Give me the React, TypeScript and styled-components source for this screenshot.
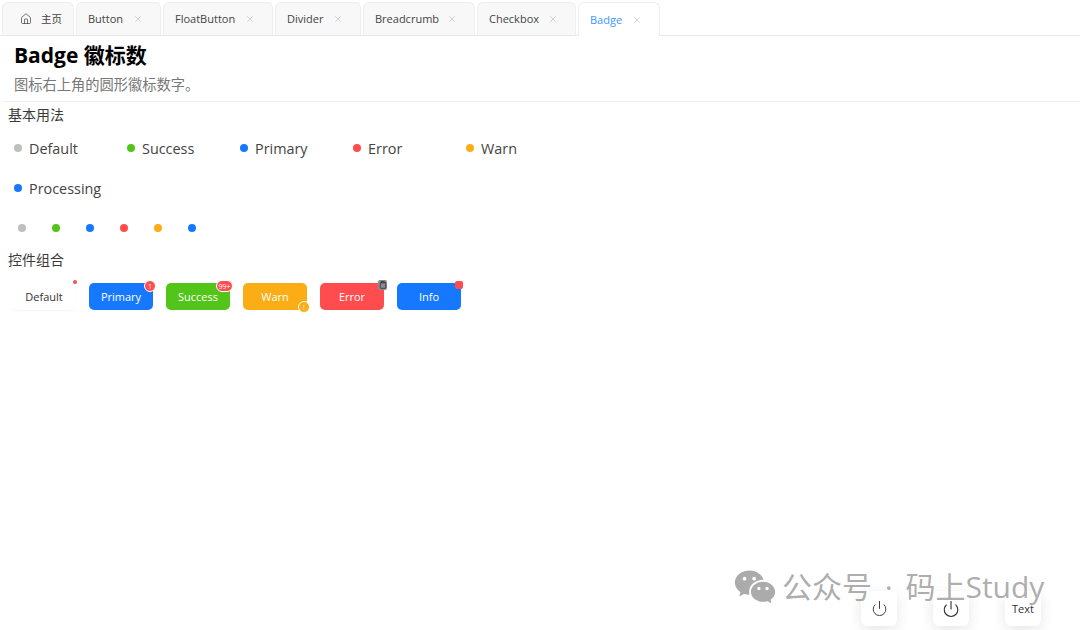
import { FunctionComponent } from "react";
import styled, { createGlobalStyle } from "styled-components";
import { Clipboard, House, Power, X } from "lucide-react";
import { RiWechatFill } from "react-icons/ri";

const FONT = `"Open Sans", "Noto Sans CJK SC", sans-serif`;

const COLORS: Record<string, string> = {
  default: "#bfbfbf",
  success: "#52c41a",
  primary: "#1677ff",
  error: "#ff4d4f",
  warn: "#faad14",
};

const tabs = [
  { label: "Button", width: 85 },
  { label: "FloatButton", width: 110 },
  { label: "Divider", width: 86 },
  { label: "Breadcrumb", width: 112 },
  { label: "Checkbox", width: 99 },
];

const statuses = [
  { label: "Default", color: COLORS.default },
  { label: "Success", color: COLORS.success },
  { label: "Primary", color: COLORS.primary },
  { label: "Error", color: COLORS.error },
  { label: "Warn", color: COLORS.warn },
  { label: "Processing", color: COLORS.primary },
];

const App: FunctionComponent = () => {
  return (
    <Page>
      <GlobalStyle />
      <TabBar>
        <HomeTab>
          <House size={12} strokeWidth={1.5} />
          <span>主页</span>
        </HomeTab>
        {tabs.map((t) => (
          <Tab key={t.label} $width={t.width}>
            {t.label}
            <CloseIcon size={10} strokeWidth={1.2} />
          </Tab>
        ))}
        <Tab $width={82} $active>
          Badge
          <CloseIcon size={10} strokeWidth={1.2} />
        </Tab>
      </TabBar>

      <Header>
        <Title>Badge 徽标数</Title>
        <Subtitle>图标右上角的圆形徽标数字。</Subtitle>
      </Header>

      <Section>
        <SectionTitle>基本用法</SectionTitle>
        <StatusGrid>
          {statuses.map((s) => (
            <StatusItem key={s.label}>
              <Dot $color={s.color} />
              {s.label}
            </StatusItem>
          ))}
        </StatusGrid>
        <DotRow>
          {statuses.map((s) => (
            <Dot key={s.label} $color={s.color} />
          ))}
        </DotRow>
      </Section>

      <Section>
        <SectionTitle>控件组合</SectionTitle>
        <ButtonRow>
          <DemoButton $bg="#fff" $fg="#333">
            Default
            <TinyDot />
          </DemoButton>
          <DemoButton $bg={COLORS.primary}>
            Primary
            <CountBadge>1</CountBadge>
          </DemoButton>
          <DemoButton $bg={COLORS.success}>
            Success
            <WideBadge>99+</WideBadge>
          </DemoButton>
          <DemoButton $bg={COLORS.warn}>
            Warn
            <WarnBadge>!</WarnBadge>
          </DemoButton>
          <DemoButton $bg={COLORS.error}>
            Error
            <IconBadge>
              <Clipboard size={8} strokeWidth={2} />
            </IconBadge>
          </DemoButton>
          <DemoButton $bg={COLORS.primary}>
            Info
            <SquareBadge />
          </DemoButton>
        </ButtonRow>
      </Section>

      <FloatBar>
        <FloatButton>
          <Power size={17} strokeWidth={1.3} />
        </FloatButton>
        <FloatButton>
          <Power size={18} strokeWidth={1.5} />
        </FloatButton>
        <FloatButton>Text</FloatButton>
      </FloatBar>

      <Watermark>
        <RiWechatFill size={44} />
        <span>公众号 · 码上Study</span>
      </Watermark>
    </Page>
  );
};

const GlobalStyle = createGlobalStyle`
  html, body {
    margin: 0;
    padding: 0;
    background: #fff;
    overflow: hidden;
  }
`;

const Page = styled.div`
  position: relative;
  width: 1080px;
  height: 630px;
  overflow: hidden;
  font-family: ${FONT};
  color: #333;
`;

const TabBar = styled.div`
  display: flex;
  align-items: flex-end;
  gap: 2px;
  height: 36px;
  padding: 0 0 0 2px;
  box-sizing: border-box;
  border-bottom: 1px solid #e8e8e8;
`;

const Tab = styled.div<{ $width: number; $active?: boolean }>`
  display: flex;
  align-items: center;
  justify-content: space-between;
  box-sizing: border-box;
  width: ${(p) => p.$width}px;
  height: ${(p) => (p.$active ? 34 : 33)}px;
  margin-bottom: ${(p) => (p.$active ? -1 : 0)}px;
  padding: 0 17px 0 11px;
  font-size: 11px;
  color: ${(p) => (p.$active ? "#4096ff" : "#444")};
  background: ${(p) => (p.$active ? "#fff" : "#f8f8f8")};
  border: 1px solid #eee;
  border-bottom: ${(p) => (p.$active ? "none" : "1px solid transparent")};
  border-radius: 6px 6px 0 0;
`;

const HomeTab = styled(Tab).attrs({ $width: 72 })`
  justify-content: flex-start;
  gap: 9px;
  padding: 0 0 0 17px;
  font-size: 10.5px;
`;

const CloseIcon = styled(X)`
  flex: none;
  color: #aaa;
`;

const Header = styled.div`
  margin-left: 3px;
  padding: 5px 0 5px 11px;
  height: 55px;
  border-bottom: 1px solid #eee;
`;

const Title = styled.div`
  font-size: 21px;
  line-height: 28px;
  font-weight: 700;
  color: #000;
`;

const Subtitle = styled.div`
  margin-top: 6px;
  font-size: 14.25px;
  line-height: 20px;
  color: #777;
`;

const Section = styled.div`
  padding-left: 8px;
`;

const SectionTitle = styled.div`
  font-size: 14px;
  line-height: 25px;
  color: #3a3a3a;
`;

const StatusGrid = styled.div`
  display: grid;
  grid-template-columns: repeat(5, 113px);
  grid-auto-rows: 40px;
  margin-top: 1px;
  padding-left: 6px;
`;

const StatusItem = styled.div`
  display: flex;
  align-items: center;
  gap: 7px;
  font-size: 14.4px;
  color: #444;
`;

const Dot = styled.span<{ $color: string }>`
  flex: none;
  width: 8px;
  height: 8px;
  border-radius: 50%;
  background: ${(p) => p.$color};
`;

const DotRow = styled.div`
  display: flex;
  align-items: center;
  gap: 26px;
  height: 20px;
  margin: 10px 0 9px;
  padding: 0 0 0 10px;
`;

const ButtonRow = styled.div`
  display: flex;
  gap: 13px;
  margin-top: 11px;
  padding-left: 4px;
`;

const DemoButton = styled.div<{ $bg: string; $fg?: string }>`
  position: relative;
  display: flex;
  align-items: center;
  justify-content: center;
  width: 64px;
  height: 27px;
  font-size: 11px;
  border-radius: 5px;
  color: ${(p) => p.$fg ?? "#fff"};
  background: ${(p) => p.$bg};
  box-shadow: ${(p) => (p.$bg === "#fff" ? "0 1px 2px rgba(0,0,0,.04)" : "none")};
`;

const TinyDot = styled.span`
  position: absolute;
  top: -3px;
  right: -1px;
  width: 4px;
  height: 4px;
  border-radius: 50%;
  background: #ff4d4f;
`;

const CountBadge = styled.span`
  position: absolute;
  top: -3px;
  right: -3px;
  display: flex;
  align-items: center;
  justify-content: center;
  box-sizing: border-box;
  width: 12px;
  height: 12px;
  font-size: 7px;
  border-radius: 50%;
  color: #fff;
  background: #ff4d4f;
  border: 1px solid #fff;
`;

const WideBadge = styled(CountBadge)`
  width: 17px;
  right: -3px;
  border-radius: 6px;
`;

const WarnBadge = styled(CountBadge)`
  top: auto;
  bottom: -3px;
  right: -3px;
  background: #faad14;
`;

const IconBadge = styled.span`
  position: absolute;
  top: -3px;
  right: -3px;
  display: flex;
  align-items: center;
  justify-content: center;
  width: 9px;
  height: 10px;
  border-radius: 2px;
  color: #222;
  background: #8a8a96;
`;

const SquareBadge = styled.span`
  position: absolute;
  top: -2px;
  right: -2px;
  width: 8px;
  height: 8px;
  border-radius: 2px;
  background: #ff4d4f;
`;

const FloatBar = styled.div`
  position: absolute;
  left: 861px;
  top: 591px;
  display: flex;
  gap: 36px;
`;

const FloatButton = styled.div`
  display: flex;
  align-items: center;
  justify-content: center;
  width: 36px;
  height: 35px;
  font-size: 11px;
  color: #333;
  background: #fff;
  border-radius: 6px;
  box-shadow: 0 4px 14px rgba(0, 0, 0, 0.1);
`;

const Watermark = styled.div`
  position: absolute;
  left: 733px;
  top: 565px;
  display: flex;
  align-items: center;
  gap: 5px;
  font-size: 30px;
  line-height: 44px;
  word-spacing: 5px;
  color: rgba(120, 120, 120, 0.62);
  white-space: nowrap;
`;

export default App;
